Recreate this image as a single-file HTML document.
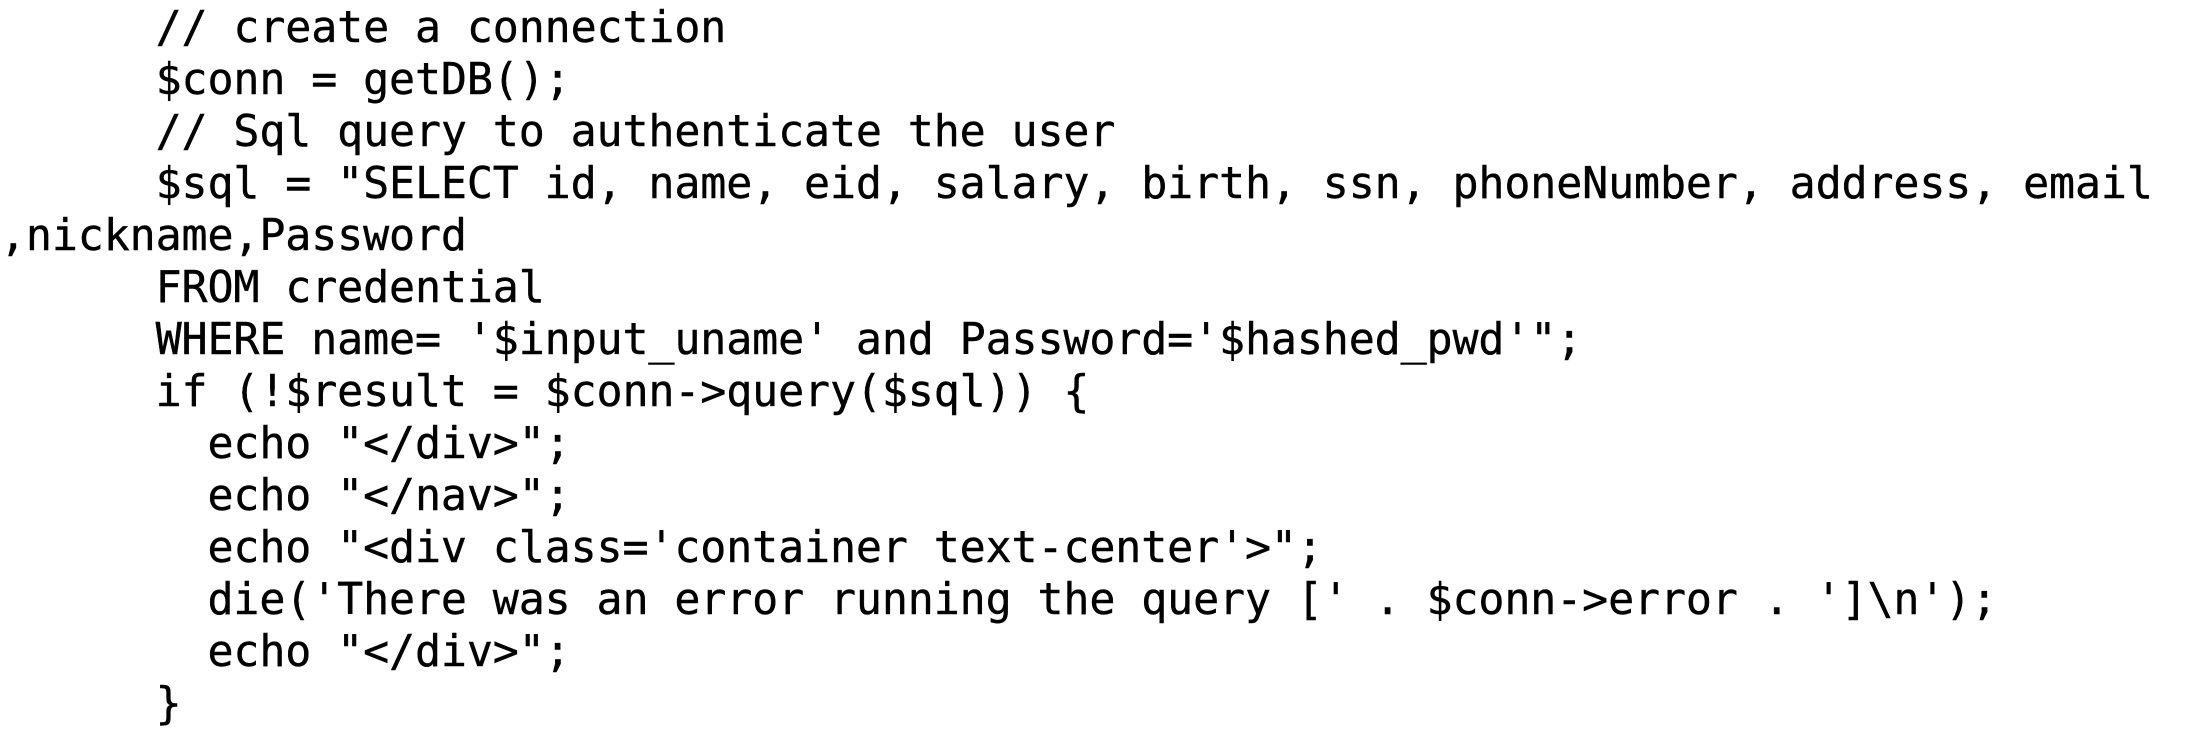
<!DOCTYPE html>
<html><head><meta charset="utf-8"><style>
html,body{margin:0;padding:0;background:#fff;width:2186px;height:730px;overflow:hidden}
pre{margin:0;padding:2px 0 0 0;font-family:"DejaVu Sans Mono","Liberation Mono",monospace;font-size:43.3px;line-height:52px;color:#000;letter-spacing:-0.13px;-webkit-text-stroke:0.4px #000}
</style></head><body><pre>      // create a connection
      $conn = getDB();
      // Sql query to authenticate the user
      $sql = "SELECT id, name, eid, salary, birth, ssn, phoneNumber, address, email
,nickname,Password
      FROM credential
      WHERE name= '$input_uname' and Password='$hashed_pwd'";
      if (!$result = $conn-&gt;query($sql)) {
        echo "&lt;/div&gt;";
        echo "&lt;/nav&gt;";
        echo "&lt;div class='container text-center'&gt;";
        die('There was an error running the query [' . $conn-&gt;error . ']\n');
        echo "&lt;/div&gt;";
      }</pre></body></html>
